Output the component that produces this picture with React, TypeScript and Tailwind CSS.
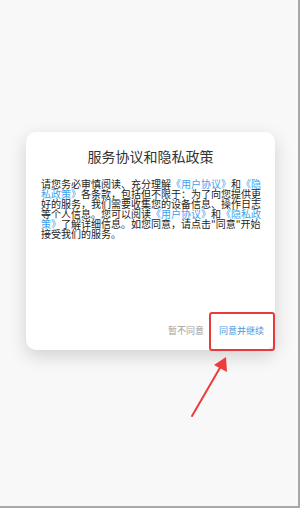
export default function App() {
  const link = "text-[#3d9ff0]";
  return (
    <div
      className="relative h-[508px] w-[300px] overflow-hidden border-r-2 border-b-2 border-[#a8a8a8] bg-[#f8f8f8]"
      style={{ fontFamily: '"Noto Sans CJK SC", "Noto Sans", sans-serif' }}
    >
      {/* dialog card */}
      <div className="relative ml-[26px] mt-[132px] flex h-[218px] w-[249px] flex-col rounded-[10px] bg-white shadow-[0_6px_18px_rgba(0,0,0,0.16)]">
        <h1 className="mt-[15px] text-center text-[14px] leading-[18px] text-[#333]">
          服务协议和隐私政策
        </h1>
        <p className="mt-[14px] pl-[15px] pr-[13px] text-[10px] leading-[10px] text-[#222]">
          请您务必审慎阅读、充分理解<span className={link}>《用户协议》</span>和<span className={link}>《隐私政策》</span>各条款，包括但不限于：为了向您提供更好的服务，我们需要收集您的设备信息、操作日志等个人信息。您可以阅读<span className={link}>《用户协议》</span>和<span className={link}>《隐私政策》</span>了解详细信息。如您同意，请点击"同意"开始接受我们的服务。
        </p>
        <div className="mt-auto mb-[13px] flex items-center justify-end gap-[15px] pr-[11px] text-[9px] leading-[12px]">
          <span className="text-[#a0a0a0]">暂不同意</span>
          <span className="text-[#4a9ae0]">同意并继续</span>
        </div>
        {/* highlight box */}
        <div className="absolute left-[183px] top-[180px] h-[39px] w-[66px] rounded-[3px] border-2 border-[#e83a3a]" />
      </div>

      {/* pointer arrow */}
      <svg
        className="absolute left-[185px] top-[352px]"
        width="50"
        height="70"
        viewBox="0 0 50 70"
      >
        <line x1="7" y1="64" x2="36" y2="14" stroke="#ee3b3b" strokeWidth="2" strokeLinecap="round" />
        <polygon points="41,5 42,20 29,13" fill="#ee3b3b" />
      </svg>
    </div>
  );
}
